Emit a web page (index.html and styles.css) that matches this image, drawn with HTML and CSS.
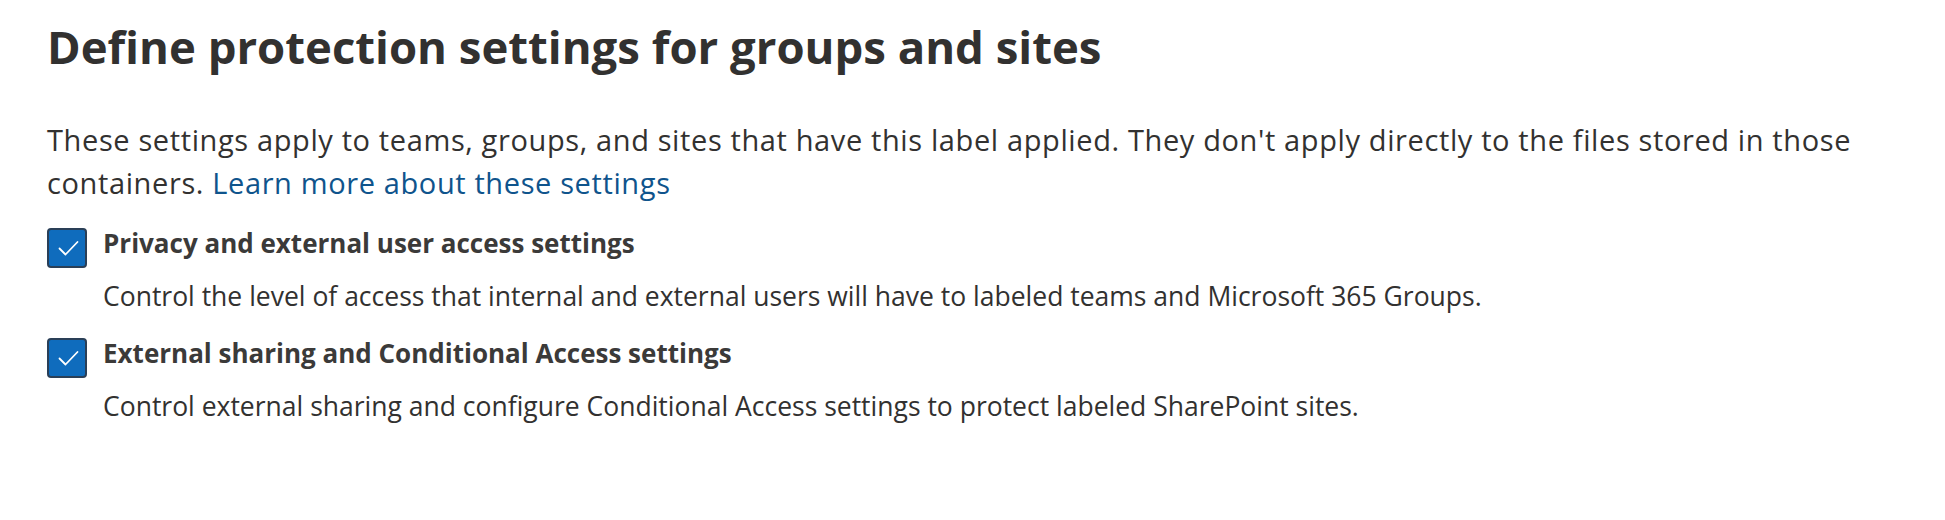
FILE: index.html
```html
<!DOCTYPE html>
<html lang="en">
<head>
<meta charset="utf-8">
<title>Define protection settings for groups and sites</title>
<link rel="stylesheet" href="styles.css">
</head>
<body>
<main class="page">
  <h1 class="title">Define protection settings for groups and sites</h1>
  <p class="intro">These settings apply to teams, groups, and sites that have this label applied. They don't apply directly to the files stored in those containers. <a class="link" href="#">Learn more about these settings</a></p>
  <div class="options">
    <div class="option">
      <span class="checkbox" role="checkbox" aria-checked="true">
        <svg viewBox="0 0 36 36" width="36" height="36" aria-hidden="true"><path d="M10.5 18.5 L16.5 24.5 L28.5 12" fill="none" stroke="#fff" stroke-width="1.8" stroke-linecap="round" stroke-linejoin="round"/></svg>
      </span>
      <div class="option-label">Privacy and external user access settings</div>
      <div class="option-desc">Control the level of access that internal and external users will have to labeled teams and Microsoft 365 Groups.</div>
    </div>
    <div class="option">
      <span class="checkbox" role="checkbox" aria-checked="true">
        <svg viewBox="0 0 36 36" width="36" height="36" aria-hidden="true"><path d="M10.5 18.5 L16.5 24.5 L28.5 12" fill="none" stroke="#fff" stroke-width="1.8" stroke-linecap="round" stroke-linejoin="round"/></svg>
      </span>
      <div class="option-label">External sharing and Conditional Access settings</div>
      <div class="option-desc">Control external sharing and configure Conditional Access settings to protect labeled SharePoint sites.</div>
    </div>
  </div>
</main>
</body>
</html>
```

FILE: styles.css
```css
html, body {
  margin: 0;
  padding: 0;
  background: #ffffff;
}

body {
  font-family: "Open Sans", "Noto Sans", "Liberation Sans", sans-serif;
  color: #323130;
}

.page {
  padding: 21px 40px 0 47px;
}

.title {
  margin: 0;
  font-size: 45.5px;
  line-height: 50px;
  font-weight: 700;
  color: #323130;
}

.intro {
  max-width: 1840px;
  margin: 47px 0 0 0;
  font-size: 29px;
  line-height: 43px;
  letter-spacing: 0.62px;
  font-weight: 400;
  color: #323130;
}

.link {
  color: #0f548c;
  text-decoration: none;
}

.options {
  display: flex;
  flex-direction: column;
  gap: 23px;
  margin-top: 22px;
}

.option {
  display: grid;
  grid-template-columns: 40px 1fr;
  column-gap: 16px;
  row-gap: 11px;
  align-items: start;
}

.checkbox {
  grid-row: 1;
  grid-column: 1;
  box-sizing: border-box;
  width: 40px;
  height: 40px;
  margin-top: 2px;
  border-radius: 4px;
  background: #0f6cbd;
  border: 2px solid #2a3f57;
  display: flex;
  align-items: center;
  justify-content: center;
  overflow: hidden;
}

.checkbox svg {
  display: block;
  flex: none;
}

.option-label {
  grid-row: 1;
  grid-column: 2;
  font-size: 26px;
  line-height: 34px;
  font-weight: 700;
  color: #3b3a39;
}

.option-desc {
  grid-row: 2;
  grid-column: 2;
  font-size: 26.5px;
  line-height: 34px;
  font-weight: 400;
  color: #323130;
}
```
